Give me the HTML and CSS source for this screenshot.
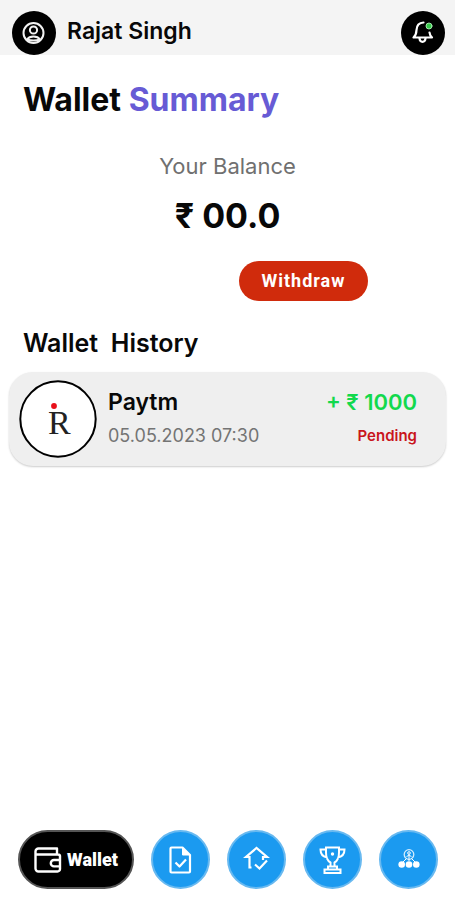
FILE: index.html
```html
<!DOCTYPE html>
<html lang="en">
<head>
<meta charset="utf-8">
<meta name="viewport" content="width=device-width, initial-scale=1">
<title>Wallet Summary</title>
<link rel="stylesheet" href="styles.css">
</head>
<body>
<header class="topbar">
  <button class="round-btn" type="button" aria-label="Profile">
    <svg width="24" height="24" viewBox="0 0 24 24" fill="none" stroke="#f2f2f2" stroke-width="2"><circle cx="11.500" cy="12" r="10"/><circle cx="11.500" cy="9" r="3.600"/><path d="M5 18.500c1.500-2.300 3.500-3 6.500-3s5 .7 6.500 3c-4 1.300-9 1.300-13 0z"/></svg>
  </button>
  <span class="user">Rajat Singh</span>
  <button class="round-btn" type="button" aria-label="Notifications">
    <svg width="24" height="24" viewBox="0 0 24 24" fill="none" stroke="#fff" stroke-width="2.200" stroke-linejoin="round" stroke-linecap="round"><path d="M12.500 1.500C8 1.700 5.700 5 5.500 9c-.1 4-.8 5.500-3 7.500h18.500c-1.500-1.500-2.300-3-2.500-5M8.500 17.500c.5 4.500 5.500 4.500 6 0"/><circle cx="18" cy="5" r="3" fill="#35c94a" stroke="#a0eaaa" stroke-width="1"/></svg>
  </button>
</header>
<main class="content">
  <h1 class="title">Wallet <span class="accent">Summary</span></h1>
  <section class="balance">
    <p class="balance-label">Your Balance</p>
    <p class="balance-value">₹ 00.0</p>
    <button class="withdraw" type="button">Withdraw</button>
  </section>
  <h2 class="subtitle">Wallet&nbsp; History</h2>
  <article class="entry">
    <svg class="logo" width="78" height="78" viewBox="0 0 78 78" role="img" aria-label="R"><circle cx="39" cy="39" r="37.700" fill="#fff" stroke="#000" stroke-width="2"/><text class="logo-text" x="29" y="54">R</text><circle cx="35" cy="26" r="2.900" fill="#e80f1a"/></svg>
    <div class="details">
      <h3 class="name">Paytm</h3>
      <time class="date" datetime="2023-05-05T07:30">05.05.2023 07:30</time>
    </div>
    <div class="result">
      <span class="amount">+ ₹ 1000</span>
      <span class="status">Pending</span>
    </div>
  </article>
</main>
<nav class="tabs" aria-label="Main">
  <a class="tab active" href="#wallet">
    <svg width="28" height="26" viewBox="0 0 28 26" fill="none" stroke="#fff" stroke-width="2.400" stroke-linejoin="round"><path d="M26 8.500V22a2.500 2.500 0 0 1-2.500 2.500h-19A3 3 0 0 1 1.500 21.500V4.500a3 3 0 0 1 3-3H23V7M1.500 7.500H24A2 2 0 0 1 26 9.500M26 13h-6a3.200 3.200 0 0 0 0 6.400h6"/></svg>
    <span>Wallet</span>
  </a>
  <a class="tab" href="#tasks" aria-label="Tasks">
    <svg width="30" height="30" viewBox="0 0 30 30" fill="none" stroke="#fff" stroke-width="2.200" stroke-linejoin="round"><path d="M5.500 2.500h11l7.500 7.500v16.500a1 1 0 0 1-1 1h-17.500a1 1 0 0 1-1-1v-23a1 1 0 0 1 1-1z"/><path d="M16.500 2.500v7.500h7.500z" fill="#fff" stroke-width="1"/><path d="M9.500 17.500l4 4 6.500-7"/></svg>
  </a>
  <a class="tab" href="#home" aria-label="Home">
    <svg width="30" height="30" viewBox="0 0 30 30" fill="none" stroke="#fff" stroke-width="2.200"><path d="M9.500 22.500H7.500V12H4L14.500 3l10.500 9h-4v3M13 19.500l4.500 4 7.500-8"/></svg>
  </a>
  <a class="tab" href="#rewards" aria-label="Rewards">
    <svg width="30" height="30" viewBox="0 0 30 30" fill="none" stroke="#fff" stroke-width="2"><path d="M8 2.500h13v5c0 6-2.500 9-4.500 10v4h-4v-4c-2-1-4.500-4-4.500-10zM8 4.500H2.500c0 5 2.500 7.500 7 8M21 4.500h5.500c0 5-2.500 7.500-7 8M10 21.500h9v3h-9zM6.500 24.500h16v3.500h-16z"/><circle cx="14.500" cy="9" r="1.700" fill="#fff" stroke="none"/></svg>
  </a>
  <a class="tab" href="#team" aria-label="Team">
    <svg width="30" height="30" viewBox="0 0 30 30" fill="none" stroke="#fff"><circle cx="15" cy="9.500" r="4.800" stroke-width="1.300" stroke="#d3ecfd"/><circle cx="15" cy="8" r="1.300"/><path d="M12.500 12c1-2 4-2 5 0M15 9v7M12.500 13.500L8 18M17.500 13.500L22 18"/><g fill="#fff" stroke="none"><circle cx="7.700" cy="19.500" r="3.300"/><circle cx="15" cy="19.500" r="3.300"/><circle cx="22.300" cy="19.500" r="3.300"/></g></svg>
  </a>
</nav>
</body>
</html>
```
FILE: styles.css
```css
* {
  box-sizing: border-box;
}

body {
  margin: 0;
  min-height: 100vh;
  display: flex;
  flex-direction: column;
  background: #fff;
  color: #080808;
  font-family: Inter, "Open Sans", sans-serif;
}

h1,
h2,
h3,
p {
  margin: 0;
}

button {
  border: 0;
  padding: 0;
  cursor: pointer;
}

.topbar {
  display: flex;
  align-items: center;
  gap: 11px;
  padding: 11px 10px 0 12px;
  background: #f4f4f4;
}

.round-btn {
  display: flex;
  align-items: center;
  justify-content: center;
  width: 44px;
  height: 44px;
  border-radius: 50%;
  background: #000;
}

.user {
  flex: 1;
  padding-bottom: 4px;
  font-size: 23px;
  line-height: 28px;
  font-weight: 600;
}

.content {
  flex: 1;
}

.title {
  padding: 25px 23px 0;
  font-size: 32px;
  line-height: 40px;
  font-weight: 700;
}

.accent {
  color: #675bd5;
}

.balance {
  display: flex;
  flex-direction: column;
  align-items: center;
  padding-top: 30px;
}

.balance-label {
  font-size: 22px;
  line-height: 32px;
  color: #707070;
}

.balance-value {
  padding-top: 10px;
  font-size: 34px;
  line-height: 48px;
  font-weight: 700;
}

.withdraw {
  align-self: flex-end;
  width: 129px;
  height: 40px;
  margin: 21px 87px 0 0;
  border-radius: 20px;
  background: #d02b0c;
  color: #fff;
  font: 700 18px/24px Roboto, sans-serif;
  letter-spacing: 1px;
}

.subtitle {
  padding: 26px 23px 0;
  font-size: 25px;
  line-height: 32px;
  font-weight: 600;
}

.entry {
  display: flex;
  align-items: center;
  gap: 11px;
  margin: 13px 9px 0;
  padding: 8px 29px 8px 10px;
  border-radius: 24px;
  background: #efefef;
  box-shadow: 0 1px 2px #ccc;
}

.logo {
  flex: none;
}

.logo-text {
  font: 34px "Liberation Serif", serif;
  fill: #222;
}

.details,
.result {
  display: flex;
  flex-direction: column;
  gap: 4px;
}

.details {
  flex: 1;
}

.result {
  align-items: flex-end;
}

.name {
  font-size: 23px;
  line-height: 30px;
  font-weight: 600;
}

.date {
  font-size: 18px;
  line-height: 30px;
  color: #747474;
}

.amount {
  font-size: 22px;
  line-height: 30px;
  font-weight: 600;
  color: #12d94d;
}

.status {
  font-size: 15px;
  line-height: 30px;
  font-weight: 600;
  color: #c9151b;
}

.tabs {
  display: flex;
  justify-content: space-between;
  padding: 0 17px 11px 18px;
}

.tab {
  display: flex;
  align-items: center;
  justify-content: center;
  width: 59px;
  height: 59px;
  border: 2px solid #68b9f0;
  border-radius: 30px;
  background: #1b9af0;
  color: #fff;
  text-decoration: none;
}

.active {
  gap: 5px;
  width: 116px;
  border-color: #555;
  background: #000;
  font: 900 18px/24px Roboto, sans-serif;
}
```
